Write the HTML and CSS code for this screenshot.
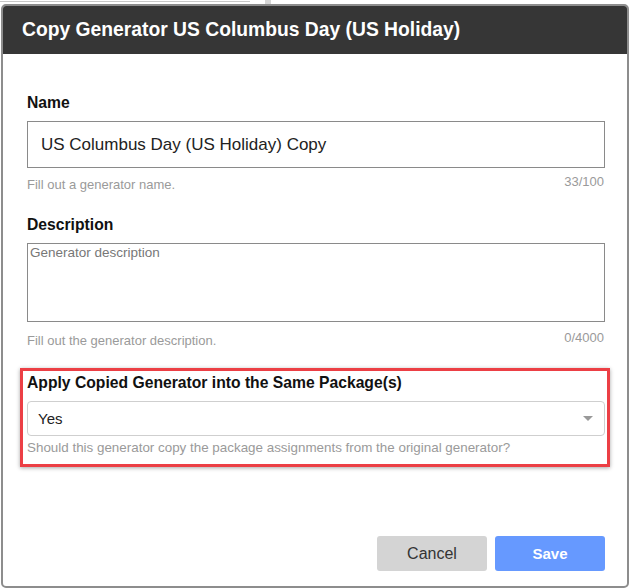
FILE: index.html
```html
<!DOCTYPE html>
<html lang="en">
<head>
    <meta charset="UTF-8">
    <meta name="viewport" content="width=device-width, initial-scale=1.0">
    <title>Copy Generator</title>
    <link rel="stylesheet" href="styles.css">
</head>
<body>
    <!-- page behind the dialog -->
    <div class="backdrop">
        <span class="backdrop-rule"></span>
        <span class="backdrop-tab"></span>
    </div>

    <div class="modal">
        <div class="modal-header">
            <h1>Copy Generator US Columbus Day (US Holiday)</h1>
        </div>

        <form class="modal-body" onsubmit="return false">
            <label class="field-label label-first" for="genName">Name</label>
            <input class="text-input" type="text" id="genName" value="US Columbus Day (US Holiday) Copy">
            <div class="field-meta">
                <span class="hint">Fill out a generator name.</span>
                <span class="counter">33/100</span>
            </div>

            <label class="field-label" for="genDesc">Description</label>
            <textarea class="text-area" id="genDesc" placeholder="Generator description"></textarea>
            <div class="field-meta">
                <span class="hint">Fill out the generator description.</span>
                <span class="counter">0/4000</span>
            </div>

            <div class="field-highlight">
                <label class="field-label">Apply Copied Generator into the Same Package(s)</label>
                <div class="select-box">
                    <span>Yes</span>
                    <span class="caret"></span>
                </div>
                <div class="hint hint-select">Should this generator copy the package assignments from the original generator?</div>
            </div>

            <div class="modal-footer">
                <button type="button" class="btn btn-cancel">Cancel</button>
                <button type="submit" class="btn btn-save">Save</button>
            </div>
        </form>
    </div>
</body>
</html>
```

FILE: styles.css
```css
body {
    margin: 0;
    background-color: #fff;
    font-family: "Liberation Sans", Arial, sans-serif;
    color: #111;
}
.backdrop {
    height: 4px;
    display: flex;
    align-items: flex-start;
}
.backdrop-rule {
    width: 250px;
    height: 1px;
    margin-top: 1px;
    background-color: #c8c8c8;
}
.backdrop-tab {
    width: 6px;
    height: 4px;
    margin-left: 15px;
    background-color: #d6d6d6;
}
.modal {
    margin-left: 1px;
    width: 628px;
    height: 584px;
    border: 2px solid #8d8d8d;
    border-radius: 5px;
    box-sizing: border-box;
    overflow: hidden;
    display: flex;
    flex-direction: column;
    background-color: #fff;
}
.modal-header {
    height: 48px;
    background-color: #363636;
    display: flex;
    align-items: center;
    padding-left: 19px;
}
.modal-header h1 {
    margin: 0;
    color: #fff;
    font-size: 19.3px;
    font-weight: bold;
}
.modal-body {
    flex: 1;
    display: flex;
    flex-direction: column;
    padding: 0 22px 15px 24px;
}
.field-label {
    display: block;
    font-size: 15.7px;
    font-weight: bold;
    line-height: 18px;
    margin-top: 24px;
    color: #111;
}
.label-first {
    margin-top: 40px;
}
.text-input {
    margin-top: 9px;
    height: 47px;
    box-sizing: border-box;
    border: 1px solid #8a8a8a;
    border-radius: 0;
    padding: 0 13px;
    font-family: inherit;
    font-size: 17px;
    color: #222;
    outline: none;
}
.text-area {
    margin-top: 9px;
    height: 79px;
    box-sizing: border-box;
    border: 1px solid #8a8a8a;
    padding: 1px 2px;
    font-family: inherit;
    font-size: 13.5px;
    line-height: 16px;
    resize: none;
    outline: none;
}
.text-area::placeholder {
    color: #777;
}
.field-meta {
    margin-top: 7px;
    display: flex;
    justify-content: space-between;
    align-items: flex-start;
    line-height: 14px;
    font-size: 13px;
}
.text-area + .field-meta {
    margin-top: 9px;
}
.hint {
    color: #9a9a9a;
    font-size: 13px;
    padding-top: 3px;
}
.counter {
    color: #9a9a9a;
    padding-right: 1px;
}
.field-highlight {
    margin: 20px -5px 0 -7px;
    padding: 3px 2px 8px 4px;
    border: 3px solid #ec3f45;
    box-shadow: 0 1px 4px rgba(0, 0, 0, 0.35);
}
.field-highlight .field-label {
    margin-top: 0;
}
.select-box {
    margin-top: 9px;
    height: 35px;
    box-sizing: border-box;
    border: 1px solid #cfcfcf;
    border-radius: 4px;
    padding: 0 11px 0 10px;
    display: flex;
    justify-content: space-between;
    align-items: center;
    font-size: 15px;
    color: #222;
}
.caret {
    width: 0;
    height: 0;
    border-left: 5px solid transparent;
    border-right: 5px solid transparent;
    border-top: 5px solid #999;
}
.hint-select {
    margin-top: 4px;
    padding-top: 0;
    line-height: 16px;
    font-size: 13.4px;
}
.modal-footer {
    margin-top: auto;
    display: flex;
    justify-content: flex-end;
    gap: 8px;
}
.btn {
    width: 110px;
    height: 35px;
    border: none;
    border-radius: 3px;
    font-family: inherit;
    cursor: pointer;
}
.btn-cancel {
    background-color: #d4d4d4;
    color: #333;
    font-size: 16px;
}
.btn-save {
    background-color: #6699ff;
    color: #fff;
    font-size: 15px;
    font-weight: bold;
}
```
